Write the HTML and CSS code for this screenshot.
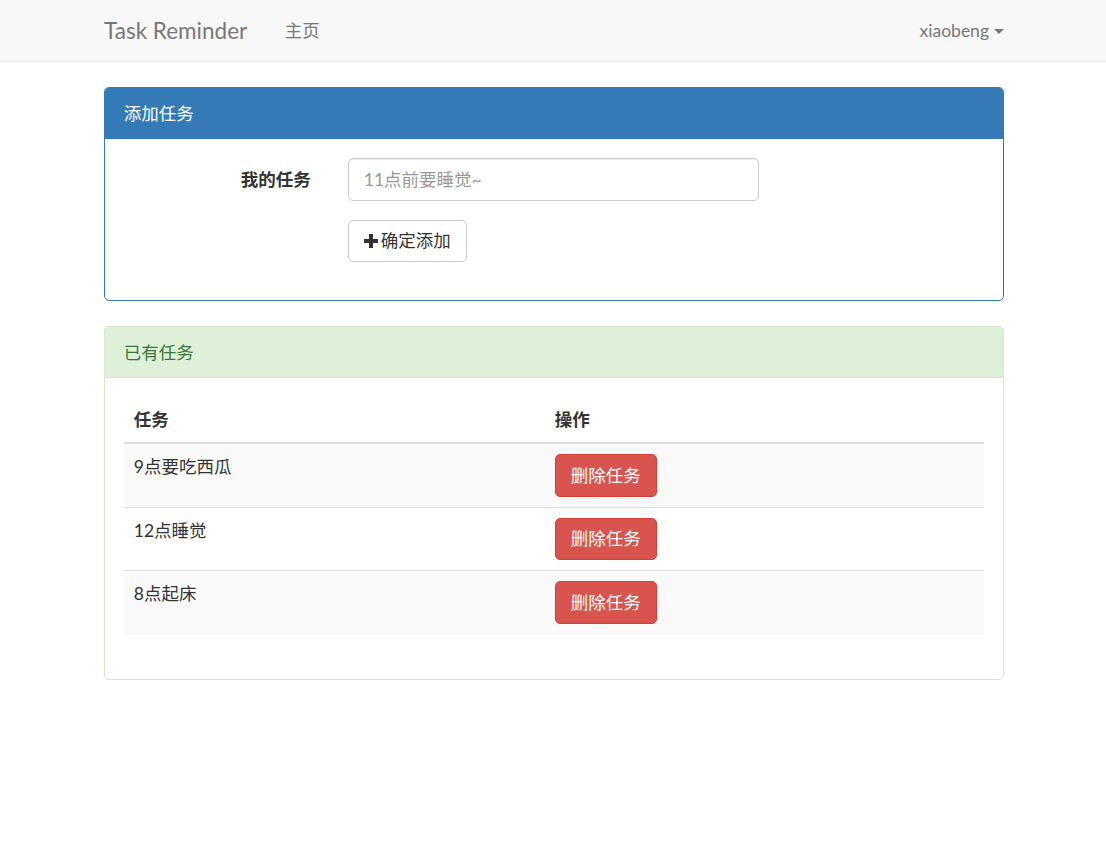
FILE: index.html
```html
<!DOCTYPE html>
<html lang="zh-CN">
<head>
<meta charset="utf-8">
<title>Task Reminder</title>
<link rel="stylesheet" href="styles.css">
</head>
<body>
<nav class="navbar">
  <div class="container nav-inner">
    <div class="nav-left">
      <a class="brand" href="#">Task Reminder</a>
      <a class="nav-link" href="#">主页</a>
    </div>
    <a class="nav-link user" href="#">xiaobeng <span class="caret"></span></a>
  </div>
</nav>

<main class="container">
  <section class="panel panel-primary">
    <div class="panel-heading">添加任务</div>
    <div class="panel-body">
      <form class="form">
        <div class="form-group">
          <label class="form-label">我的任务</label>
          <input class="form-control" type="text" placeholder="11点前要睡觉~">
        </div>
        <div class="form-group">
          <span class="form-label"></span>
          <button class="btn btn-default" type="button"><svg class="plus" viewBox="0 0 14 14" width="14" height="14"><path d="M5 0h4v5h5v4H9v5H5V9H0V5h5z" fill="#333"/></svg>确定添加</button>
        </div>
      </form>
    </div>
  </section>

  <section class="panel panel-success">
    <div class="panel-heading">已有任务</div>
    <div class="panel-body">
      <table class="table">
        <thead>
          <tr><th class="col-task">任务</th><th>操作</th></tr>
        </thead>
        <tbody>
          <tr class="odd"><td>9点要吃西瓜</td><td><button class="btn btn-danger" type="button">删除任务</button></td></tr>
          <tr><td>12点睡觉</td><td><button class="btn btn-danger" type="button">删除任务</button></td></tr>
          <tr class="odd"><td>8点起床</td><td><button class="btn btn-danger" type="button">删除任务</button></td></tr>
        </tbody>
      </table>
    </div>
  </section>
</main>
</body>
</html>
```

FILE: styles.css
```css
* { box-sizing: border-box; }

html, body {
  margin: 0;
  padding: 0;
  background: #fff;
}

body {
  font-family: Lato, "Noto Sans CJK SC", "Noto Sans", sans-serif;
  font-size: 17.5px;
  line-height: 25px;
  color: #333;
}

a { text-decoration: none; }

.container {
  width: 938px;
  margin: 0 auto;
  padding: 0 18px 0 20px;
}

/* navbar */
.navbar {
  background: #f8f8f8;
  border-bottom: 1px solid #e7e7e7;
  height: 62px;
  margin-bottom: 25px;
}

.nav-inner {
  display: flex;
  justify-content: space-between;
  align-items: center;
  height: 61px;
}

.nav-left {
  display: flex;
  align-items: center;
}

.brand {
  font-size: 22.5px;
  line-height: 25px;
  color: #777;
  padding-right: 18.75px;
}

.nav-link {
  color: #777;
  padding: 0 18.75px;
  font-size: 17.5px;
}

.nav-link.user {
  padding-right: 0;
  display: flex;
  align-items: center;
  gap: 5px;
}

.caret {
  display: inline-block;
  width: 0;
  height: 0;
  border-top: 5px solid #777;
  border-left: 5px solid transparent;
  border-right: 5px solid transparent;
  margin-top: 2px;
}

/* panels */
.panel {
  border: 1px solid transparent;
  border-radius: 5px;
  margin-bottom: 25px;
  background: #fff;
}

.panel-heading {
  padding: 12.5px 18.75px;
  border-bottom: 1px solid transparent;
  border-top-left-radius: 4px;
  border-top-right-radius: 4px;
}

.panel-body {
  padding: 19px 18.75px;
}

.panel-primary { border-color: #337ab7; }
.panel-primary .panel-heading {
  background: #337ab7;
  border-color: #337ab7;
  color: #fff;
}

.panel-success { border-color: #d6e9c6; }
.panel-success .panel-heading {
  background: #dff0d8;
  border-color: #d6e9c6;
  color: #3c763d;
}

/* form */
.form-group {
  display: flex;
  align-items: flex-start;
  margin-bottom: 19px;
}

.form-label {
  width: 187px;
  flex: none;
  text-align: right;
  font-weight: 700;
  padding-top: 8.75px;
  margin-right: 37px;
}

.form-control {
  width: 411px;
  height: 42.5px;
  padding: 7.5px 15px;
  font-family: inherit;
  font-size: 17.5px;
  line-height: 25px;
  color: #555;
  border: 1px solid #ccc;
  border-radius: 5px;
  box-shadow: inset 0 1px 1px rgba(0,0,0,.075);
  background: #fff;
}

.form-control::placeholder { color: #999; }

/* buttons */
.btn {
  display: inline-flex;
  align-items: center;
  height: 42.5px;
  padding: 7.5px 15px;
  font-family: inherit;
  font-size: 17.5px;
  line-height: 25px;
  border: 1px solid transparent;
  border-radius: 5px;
  cursor: pointer;
}

.btn-default {
  background: #fff;
  border-color: #ccc;
  color: #333;
}

.plus {
  margin-right: 3px;
  margin-top: 1px;
}

.btn-danger {
  background: #d9534f;
  border-color: #d43f3a;
  color: #fff;
}

/* table */
.table {
  width: 100%;
  border-collapse: collapse;
  margin-bottom: 25px;
}

.table th, .table td {
  text-align: left;
  vertical-align: top;
  padding: 10px;
}

.table th {
  font-weight: 700;
  border-bottom: 2px solid #ddd;
  vertical-align: bottom;
}

.table td {
  border-top: 1px solid #ddd;
}

.table tbody tr:last-child td { padding-bottom: 11px; }

.table thead + tbody tr:first-child td { border-top: 0; }

.col-task { width: 421px; }

.table tr.odd td { background: #f9f9f9; }
```
